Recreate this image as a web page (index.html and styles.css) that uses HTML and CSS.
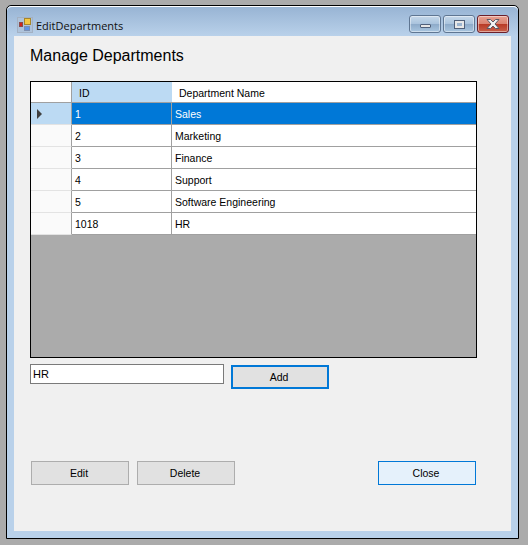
FILE: index.html
```html
<!DOCTYPE html>
<html lang="en">
<head>
	<meta charset="UTF-8">
	<title>EditDepartments</title>
	<link rel="stylesheet" href="styles.css">
</head>
<body>
<div class="window">
    <div class="titlebar">
        <svg class="app-icon" width="16" height="16" viewBox="0 0 16 16">
            <rect x="0.500" y="0.500" width="15" height="15" fill="#aec3db" stroke="#a3b1c3"/>
            <rect x="2.500" y="5.500" width="3" height="4" fill="#d0251c" stroke="#8a4a4a"/>
            <rect x="7.500" y="1.500" width="6" height="6" fill="#f4c842" stroke="#a8862a"/>
            <rect x="7.500" y="9.500" width="5" height="4" fill="#5f95e6" stroke="#7d8fb0"/>
        </svg>
        <span class="title">EditDepartments</span>
        <div class="controls">
            <span class="ctl ctl-min"><i></i></span>
            <span class="ctl ctl-max"><i></i></span>
            <span class="ctl ctl-close">
                <svg width="18" height="12" viewBox="0 0 18 12">
                    <path d="M3 1.500h3.500L9 4l2.500-2.500H15L11 6l4 4.500h-3.500L9 8l-2.500 2.500H3L7 6z" fill="#f2f2f2" stroke="#5a5a66"/>
                </svg>
            </span>
        </div>
    </div>
    <div class="client">
        <h1 class="heading">Manage Departments</h1>
        <div class="grid">
            <table class="dept-table">
                <thead>
                    <tr><th class="rowhead"></th><th class="col-id">ID</th><th>Department Name</th></tr>
                </thead>
                <tbody>
                    <tr class="selected"><td class="rowhead"><span class="arrow"></span></td><td>1</td><td>Sales</td></tr>
                    <tr><td class="rowhead"></td><td>2</td><td>Marketing</td></tr>
                    <tr><td class="rowhead"></td><td>3</td><td>Finance</td></tr>
                    <tr><td class="rowhead"></td><td>4</td><td>Support</td></tr>
                    <tr><td class="rowhead"></td><td>5</td><td>Software Engineering</td></tr>
                    <tr><td class="rowhead"></td><td>1018</td><td>HR</td></tr>
                </tbody>
            </table>
        </div>
        <div class="add-row">
            <input class="name-input" type="text" value="HR">
            <button class="btn btn-add">Add</button>
        </div>
        <div class="action-row">
            <button class="btn">Edit</button>
            <button class="btn">Delete</button>
            <button class="btn btn-close">Close</button>
        </div>
    </div>
</div>
</body>
</html>
```

FILE: styles.css
```css
html,body{
    margin: 0;
    padding: 0;
    height: 545px;
    overflow: hidden;
    background: #ababab;
    font-family: "Liberation Sans", Arial, sans-serif;
    font-size: 11px;
    color: #000000;
}
.window{
    box-sizing: border-box;
    width: 513px;
    height: 534px;
    margin: 5px 0 0 6px;
    border: 1px solid #000000;
    border-radius: 5px 5px 0 0;
    background: #b9d1ea;
    padding: 0 7px 6px 7px;
}
.titlebar{
    box-sizing: border-box;
    display: flex;
    align-items: center;
    height: 30px;
    margin: 0 -7px;
    padding: 7px 9px 0 10px;
    background: linear-gradient(#98b4d4, #b9d1ea);
    border-top: 1px solid #ffffff;
    border-radius: 5px 5px 0 0;
}
.app-icon{
    flex: none;
}
.title{
    margin-left: 3px;
    font-family: "Open Sans", "Noto Sans", sans-serif;
    font-size: 11px;
    color: #101010;
}
.controls{
    display: flex;
    gap: 2px;
    margin-left: auto;
    margin-bottom: 2px;
}
.ctl{
    box-sizing: border-box;
    display: flex;
    align-items: center;
    justify-content: center;
    width: 32px;
    height: 18px;
    border: 1px solid #5f7692;
    border-radius: 3px;
    background: linear-gradient(#c6d8ea 0%, #a9c3dd 50%, #8daac9 51%, #a9c6e0 100%);
    box-shadow: inset 0 0 0 1px rgba(255,255,255,0.45);
}
.ctl-min i{
    display: block;
    width: 9px;
    height: 2px;
    margin-top: 4px;
    background: #e6e6e6;
    border: 1px solid #50607a;
    border-radius: 1px;
}
.ctl-max i{
    box-sizing: border-box;
    display: block;
    width: 9px;
    height: 7px;
    border: 2px solid #e8e8e8;
    outline: 1px solid #50607a;
    background: #9db5d0;
}
.ctl-close{
    border-color: #6b1f2a;
    background: linear-gradient(#e8a090 0%, #d98270 50%, #b83a26 51%, #c8604a 100%);
}
.client{
    box-sizing: border-box;
    height: 495px;
    padding: 10px 16px 0 16px;
    background: #f0f0f0;
}
.heading{
    margin: 0;
    height: 35px;
    font-size: 16px;
    line-height: 20px;
    font-weight: normal;
}
.grid{
    box-sizing: border-box;
    width: 447px;
    height: 277px;
    border: 1px solid #000000;
    background: #ababab;
}
.dept-table{
    border-collapse: separate;
    border-spacing: 0;
    width: 445px;
    table-layout: fixed;
    background: #ffffff;
}
.dept-table th,.dept-table td{
    box-sizing: border-box;
    height: 22px;
    padding: 0 0 0 3px;
    border-right: 1px solid #a0a0a0;
    border-bottom: 1px solid #a0a0a0;
    font-size: 10.5px;
    font-weight: normal;
    text-align: left;
    white-space: nowrap;
}
.dept-table th{
    height: 21px;
    padding: 1px 0 0 7px;
    border-right: 0;
}
.dept-table td:last-child{
    border-right: 0;
}
.dept-table th.rowhead,.dept-table td.rowhead{
    width: 41px;
    padding: 0;
    background: #ffffff;
    border-right: 1px solid #a0a0a0;
}
.dept-table td.rowhead{
    padding-left: 6px;
    background: #fafafa;
    border-bottom-color: #e3e3e3;
}
.dept-table th.col-id{
    width: 100px;
    background: #bcdaf3;
}
.selected td{
    background: #0078d7;
    color: #ffffff;
}
.dept-table .selected td.rowhead{
    background: #bcdaf3;
}
.arrow{
    display: block;
    width: 0;
    height: 0;
    border-left: 5px solid #404040;
    border-top: 5px solid transparent;
    border-bottom: 5px solid transparent;
}
.add-row{
    display: flex;
    align-items: flex-start;
    margin-top: 6px;
}
.name-input{
    box-sizing: border-box;
    width: 194px;
    height: 20px;
    margin: 0;
    padding: 0 2px;
    border: 1px solid #7a7a7a;
    background: #ffffff;
    font-family: "Liberation Sans", Arial, sans-serif;
    font-size: 11px;
    outline: none;
}
.btn{
    box-sizing: border-box;
    width: 98px;
    height: 24px;
    padding: 0 2px 1px 0;
    border: 1px solid #adadad;
    background: #e1e1e1;
    font-family: "Liberation Sans", Arial, sans-serif;
    font-size: 10.5px;
    color: #000000;
}
.btn-add{
    margin: 1px 0 0 7px;
    border: 2px solid #0078d7;
}
.action-row{
    display: flex;
    gap: 8px;
    margin: 72px 0 0 1px;
}
.btn-close{
    margin-left: auto;
    margin-right: 19px;
    border-color: #0078d7;
    background: #e5f1fb;
}
```
